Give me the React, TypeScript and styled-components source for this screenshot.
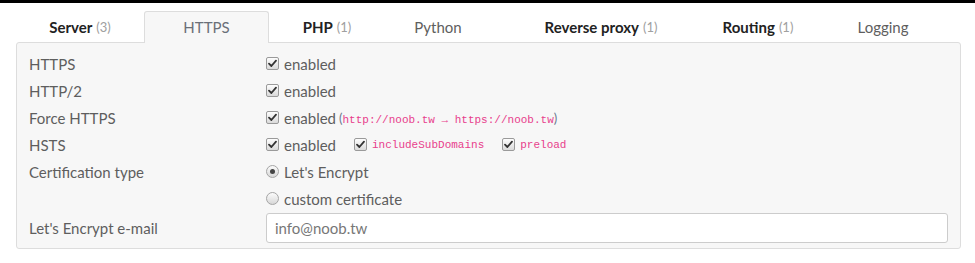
import React from 'react';
import styled, { createGlobalStyle } from 'styled-components';

const Global = createGlobalStyle`
  html, body { margin: 0; padding: 0; background: #fff; }
  body { font-family: Lato, "Noto Sans", sans-serif; color: #5e5e5e; }
`;

const TopBar = styled.div`
  height: 3px;
  background: #000;
`;

const Wrap = styled.div`
  padding: 8px 14px 0 16px;
`;

const Tabs = styled.nav`
  display: flex;
  height: 32px;
  margin-bottom: -1px;
  position: relative;
  z-index: 1;
`;

const Tab = styled.div<{ $w: number; $active?: boolean }>`
  flex: 0 0 ${(p) => p.$w}px;
  box-sizing: border-box;
  display: flex;
  align-items: center;
  justify-content: center;
  padding-bottom: 1px;
  font-size: 15px;
  color: ${(p) => (p.$active ? '#6a6f78' : '#5e5e5e')};
  border: 1px solid ${(p) => (p.$active ? '#ddd' : 'transparent')};
  border-bottom: none;
  border-radius: 3px 3px 0 0;
  background: ${(p) => (p.$active ? '#f7f7f7' : 'transparent')};
`;

const TabName = styled.span<{ $bold?: boolean }>`
  font-weight: ${(p) => (p.$bold ? 700 : 400)};
  color: ${(p) => (p.$bold ? '#222' : 'inherit')};
`;

const Count = styled.span`
  margin-left: 4px;
  font-size: 13px;
  color: #a0a0a0;
`;

const Panel = styled.section`
  border: 1px solid #ddd;
  border-radius: 3px;
  background: #f7f7f7;
  padding: 7px 12px 5px;
`;

const Row = styled.div`
  display: grid;
  grid-template-columns: 237px 1fr;
  align-items: center;
  min-height: 27px;
  font-size: 15px;
  color: #5e5e5e;
`;

const Label = styled.div``;

const Controls = styled.div`
  display: flex;
  align-items: center;
`;

const Option = styled.label<{ $gap?: number }>`
  display: inline-flex;
  align-items: center;
  gap: 5px;
  margin-right: ${(p) => p.$gap ?? 0}px;
`;

const Box = styled.span`
  width: 13px;
  height: 13px;
  box-sizing: border-box;
  border: 1px solid #9a9a9a;
  border-radius: 2px;
  background: linear-gradient(#fdfdfd, #dadada);
  display: inline-flex;
  align-items: center;
  justify-content: center;
`;

const Radio = styled.span<{ $on?: boolean }>`
  width: 13px;
  height: 13px;
  box-sizing: border-box;
  border: 1px solid #a5a5a5;
  border-radius: 50%;
  background: linear-gradient(#fbfbfb, #d8d8d8);
  display: inline-flex;
  align-items: center;
  justify-content: center;
  &::after {
    content: '';
    width: 5px;
    height: 5px;
    border-radius: 50%;
    background: ${(p) => (p.$on ? '#444' : 'transparent')};
  }
`;

const Code = styled.code`
  font-family: "Liberation Mono", "DejaVu Sans Mono", monospace;
  font-size: 11px;
  color: #e83e8c;
`;

const Paren = styled.span`
  margin-left: 3px;
  font-size: 13px;
  color: #6a7a90;
`;

const Input = styled.input`
  box-sizing: border-box;
  width: 100%;
  height: 30px;
  border: 1px solid #ccc;
  border-radius: 3px;
  background: #fff;
  padding: 0 8px;
  font-family: inherit;
  font-size: 15px;
  color: #777;
  outline: none;
`;

const InputRow = styled(Row)`
  min-height: 31px;
`;

const Check = () => (
  <Box>
    <svg width="9" height="9" viewBox="0 0 9 9">
      <path d="M1 4.6 L3.4 7 L8 1.6" fill="none" stroke="#333" strokeWidth="1.8" strokeLinecap="round" strokeLinejoin="round" />
    </svg>
  </Box>
);

const tabs = [
  { name: 'Server', count: 3, bold: true, w: 128 },
  { name: 'HTTPS', active: true, w: 125 },
  { name: 'PHP', count: 1, bold: true, w: 116 },
  { name: 'Python', w: 106 },
  { name: 'Reverse proxy', count: 1, bold: true, w: 220 },
  { name: 'Routing', count: 1, bold: true, w: 94 },
  { name: 'Logging', w: 156 },
];

export default function App() {
  return (
    <>
      <Global />
      <TopBar />
      <Wrap>
        <Tabs>
          {tabs.map((t) => (
            <Tab key={t.name} $w={t.w} $active={t.active}>
              <TabName $bold={t.bold}>{t.name}</TabName>
              {t.count !== undefined && <Count>({t.count})</Count>}
            </Tab>
          ))}
        </Tabs>
        <Panel>
          <Row>
            <Label>HTTPS</Label>
            <Controls>
              <Option><Check />enabled</Option>
            </Controls>
          </Row>
          <Row>
            <Label>HTTP/2</Label>
            <Controls>
              <Option><Check />enabled</Option>
            </Controls>
          </Row>
          <Row>
            <Label>Force HTTPS</Label>
            <Controls>
              <Option><Check />enabled</Option>
              <Paren>(<Code>http://noob.tw → https://noob.tw</Code>)</Paren>
            </Controls>
          </Row>
          <Row>
            <Label>HSTS</Label>
            <Controls>
              <Option $gap={18}><Check />enabled</Option>
              <Option $gap={18}><Check /><Code>includeSubDomains</Code></Option>
              <Option><Check /><Code>preload</Code></Option>
            </Controls>
          </Row>
          <Row>
            <Label>Certification type</Label>
            <Controls>
              <Option><Radio $on />Let's Encrypt</Option>
            </Controls>
          </Row>
          <Row>
            <Label />
            <Controls>
              <Option><Radio />custom certificate</Option>
            </Controls>
          </Row>
          <InputRow>
            <Label>Let's Encrypt e-mail</Label>
            <Input defaultValue="info@noob.tw" />
          </InputRow>
        </Panel>
      </Wrap>
    </>
  );
}
